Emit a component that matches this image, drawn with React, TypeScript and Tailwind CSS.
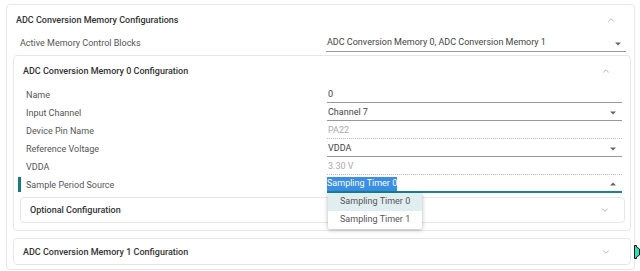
import { ChevronUp, ChevronDown } from "lucide-react";

const rows = [
  { label: "Name", value: "0", kind: "text" },
  { label: "Input Channel", value: "Channel 7", kind: "select" },
  { label: "Device Pin Name", value: "PA22", kind: "disabled" },
  { label: "Reference Voltage", value: "VDDA", kind: "select" },
  { label: "VDDA", value: "3.30 V", kind: "disabled" },
];

function Caret() {
  return (
    <svg width="6" height="4" viewBox="0 0 6 4" className="mt-[2px] shrink-0">
      <path d="M0 0.5 L6 0.5 L3 3.5 Z" fill="#666" />
    </svg>
  );
}

function Field({ label, value, kind }: { label: string; value: string; kind: string }) {
  const disabled = kind === "disabled";
  return (
    <div className="flex h-[18px] items-center">
      <div className="mt-[3px] w-[313px] pl-[12px] text-[#555]">{label}</div>
      <div
        className={`flex h-[18px] w-[295px] items-center justify-between pl-[1px] pr-[6px] ${
          disabled ? "border-b border-dotted border-[#bbb] text-[#aaa]" : "border-b border-[#999] text-[#444]"
        }`}
      >
        <span className="mt-[2px]">{value}</span>
        {kind === "select" && <Caret />}
      </div>
    </div>
  );
}

export default function App() {
  return (
    <div className="relative h-[271px] w-[640px] overflow-hidden bg-white pl-[6px] pt-[4px] font-['Roboto',sans-serif] text-[9px]">
      <div className="h-[266px] w-[629px] rounded-[4px] border border-[#e6e6e6] pl-[6px] pr-[3px]">
        {/* top section header */}
        <div className="flex h-[29px] items-center justify-between pl-[3px] pr-[15px]">
          <span className="mt-[2px] font-medium text-[#333]">ADC Conversion Memory Configurations</span>
          <ChevronUp size={10} strokeWidth={1.5} className="text-[#888]" />
        </div>
        <div className="flex h-[18px] items-center">
          <div className="mt-[2px] w-[313px] pl-[7px] text-[#555]">Active Memory Control Blocks</div>
          <div className="flex h-[18px] w-[300px] items-center justify-between border-b border-[#999] pl-[1px] pr-[5px] text-[#444]">
            <span className="mt-[1px]">ADC Conversion Memory 0, ADC Conversion Memory 1</span>
            <Caret />
          </div>
        </div>

        {/* memory 0 */}
        <div className="mt-[3px] h-[176px] rounded-[4px] border border-[#e6e6e6] pr-[5px]">
          <div className="flex h-[29px] items-center justify-between pl-[9px] pr-[14px]">
            <span className="mt-[2px] font-medium text-[#333]">ADC Conversion Memory 0 Configuration</span>
            <ChevronUp size={10} strokeWidth={1.5} className="text-[#888]" />
          </div>
          {rows.map((r) => (
            <Field key={r.label} {...r} />
          ))}
          <div className="relative flex h-[18px] items-center">
            <div className="absolute left-[4px] top-[2px] h-[15px] w-[3px] bg-[#157a86]" />
            <div className="mt-[3px] w-[313px] pl-[12px] text-[#555]">Sample Period Source</div>
            <div className="relative flex h-[18px] w-[295px] items-center justify-between border-b-2 border-[#1a8391] pr-[6px]">
              <span className="mt-[2px] bg-[#3a8ee6] text-white">Sampling Timer 0</span>
              <svg width="6" height="4" viewBox="0 0 6 4" className="mt-[2px]">
                <path d="M0 3.5 L6 3.5 L3 0.5 Z" fill="#666" />
              </svg>
              {/* open menu */}
              <div className="absolute left-[1px] top-[18px] z-10 w-[94px] rounded-[2px] bg-white text-[#555] shadow-[0_1px_4px_rgba(0,0,0,0.3)]">
                <div className="flex h-[18px] items-center bg-[#e1eef0] pl-[12px]">Sampling Timer 0</div>
                <div className="flex h-[18px] items-center pl-[12px]">Sampling Timer 1</div>
              </div>
            </div>
          </div>

          <div className="ml-[6px] mt-[4px] flex h-[26px] items-center justify-between rounded-[4px] border border-[#e6e6e6] pl-[9px] pr-[14px]">
            <span className="mt-[2px] font-medium text-[#333]">Optional Configuration</span>
            <ChevronDown size={10} strokeWidth={1.5} className="text-[#888]" />
          </div>
        </div>

        {/* memory 1 */}
        <div className="mt-[7px] flex h-[27px] items-center justify-between rounded-[4px] border border-[#e6e6e6] pl-[9px] pr-[19px]">
          <span className="mt-[2px] font-medium text-[#333]">ADC Conversion Memory 1 Configuration</span>
          <ChevronDown size={10} strokeWidth={1.5} className="text-[#888]" />
        </div>
      </div>

      {/* mouse cursor */}
      <svg width="6" height="14" viewBox="0 0 6 14" className="absolute left-[634px] top-[245px]">
        <path d="M0.5 0.5 L2.5 0.5 L2.5 2 L5.5 4 L5.5 10 L2.5 12 L2.5 13.5 L0.5 13.5 Z" fill="#27e3b5" stroke="#111" strokeWidth="1" />
      </svg>
    </div>
  );
}
